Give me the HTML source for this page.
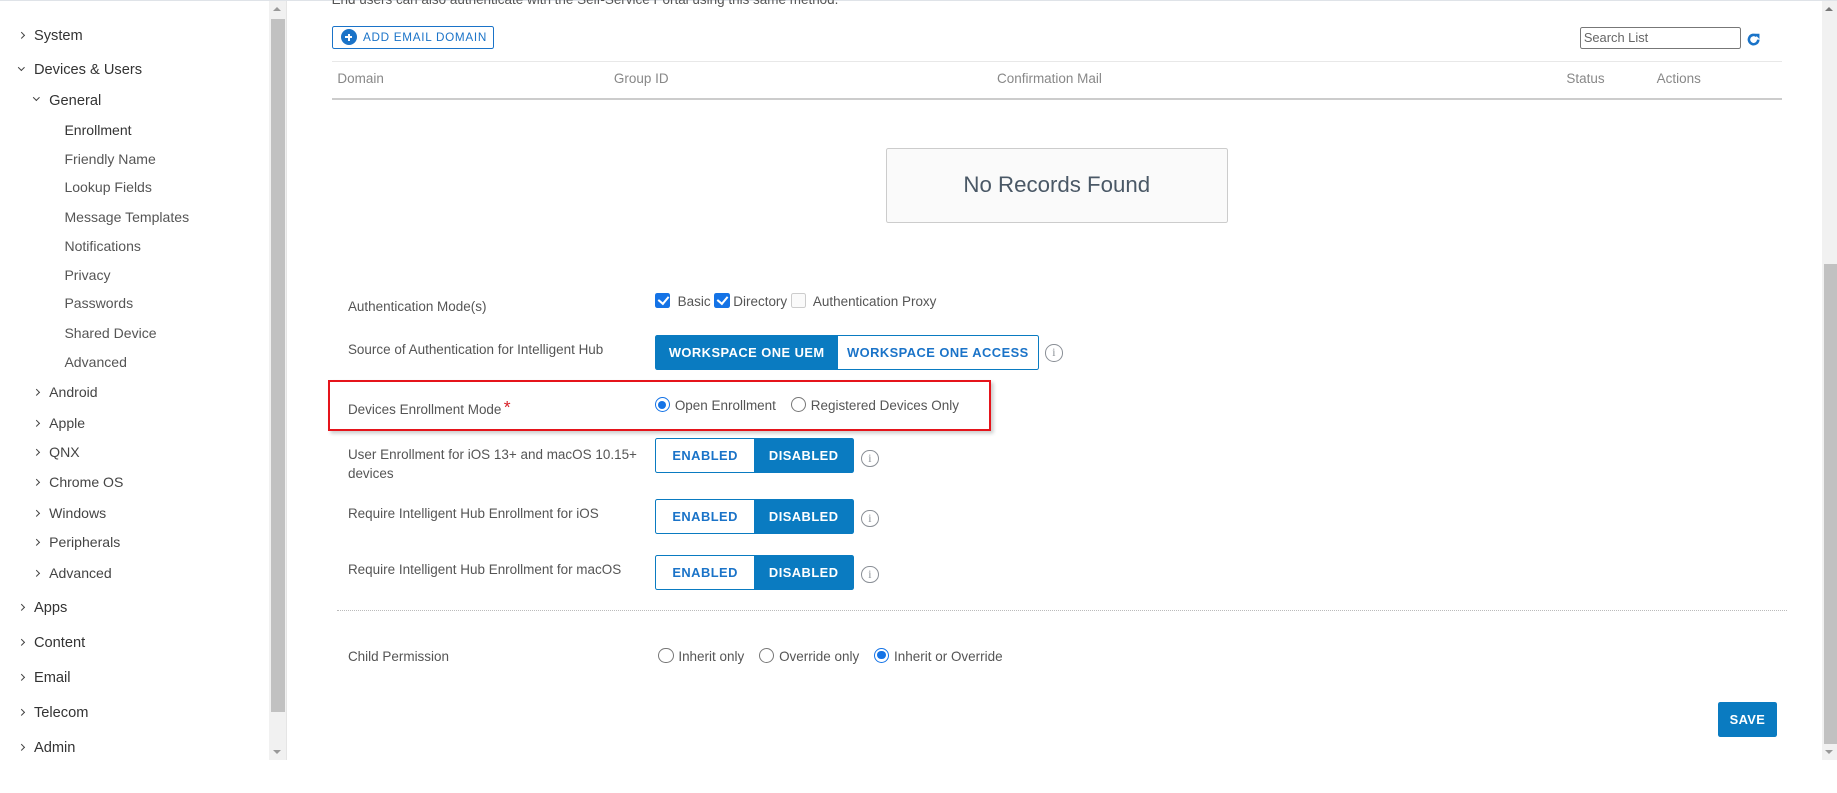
<!DOCTYPE html>
<html><head><meta charset="utf-8">
<style>
*{box-sizing:border-box;margin:0;padding:0}
html,body{width:1837px;height:793px;overflow:hidden;background:#fff}
#w{position:relative;width:1568px;height:677px;zoom:1.1716;font-family:"Liberation Sans",sans-serif;color:#565656;font-size:12px}
.a{position:absolute;white-space:nowrap}
.top{position:absolute;left:0;top:0;width:1568px;height:1px;background:#dfe3e8}
.nav1{font-size:12.5px;color:#333}
.nav2{font-size:12px;color:#444}
.nav3{font-size:12px;color:#555}
.chev{display:inline-block;width:4px;height:4px;border-right:1px solid #444;border-bottom:1px solid #444;transform:rotate(-45deg);margin-right:9px;vertical-align:2px}
.chevd{transform:rotate(45deg);vertical-align:4px}
.lbl{font-size:11.5px;color:#555}
.tg{position:absolute;display:flex;border:1px solid #0a7bc1;border-radius:2px;height:28px;font-size:11px;font-weight:bold;letter-spacing:.4px}
.tg span{display:flex;align-items:center;justify-content:center;color:#1a73c8}
.tg .on{background:#0a7bc1;color:#fff}
.info{position:absolute;width:15px;height:15px;border:1px solid #8a8f96;border-radius:50%;font-size:10px;color:#8a8f96;text-align:center;line-height:13px;font-family:"Liberation Serif",serif}
.cb{display:inline-block;width:13px;height:13px;border-radius:2px;background:#1473e6;vertical-align:-2px;position:relative}
.cb:after{content:"";position:absolute;left:4px;top:1px;width:4px;height:7px;border:solid #fff;border-width:0 2px 2px 0;transform:rotate(40deg)}
.cbo{display:inline-block;width:13px;height:13px;border-radius:2px;border:1px solid #ccc;background:#fafafa;vertical-align:-2px}
.rd{display:inline-block;width:13px;height:13px;border-radius:50%;border:1px solid #777;vertical-align:-2px;margin-right:4px}
.rd.on{border-color:#1473e6;position:relative}
.rd.on:after{content:"";position:absolute;left:2px;top:2px;width:7px;height:7px;border-radius:50%;background:#1473e6}
.opt{font-size:11.5px;color:#555}
</style></head><body><div id="w">
<div class="top"></div>
<div class="a nav1" style="left:16px;top:24px"><span class="chev"></span>System</div>
<div class="a nav1" style="left:16px;top:53px"><span class="chev chevd"></span>Devices &amp; Users</div>
<div class="a nav1" style="left:29px;top:79px"><span class="chev chevd"></span>General</div>
<div class="a nav3" style="left:55px;top:104px;color:#333">Enrollment</div>
<div class="a nav3" style="left:55px;top:129px">Friendly Name</div>
<div class="a nav3" style="left:55px;top:153px">Lookup Fields</div>
<div class="a nav3" style="left:55px;top:178px">Message Templates</div>
<div class="a nav3" style="left:55px;top:203px">Notifications</div>
<div class="a nav3" style="left:55px;top:228px">Privacy</div>
<div class="a nav3" style="left:55px;top:252px">Passwords</div>
<div class="a nav3" style="left:55px;top:277px">Shared Device</div>
<div class="a nav3" style="left:55px;top:302px">Advanced</div>
<div class="a nav2" style="left:29px;top:328px"><span class="chev"></span>Android</div>
<div class="a nav2" style="left:29px;top:354px"><span class="chev"></span>Apple</div>
<div class="a nav2" style="left:29px;top:379px"><span class="chev"></span>QNX</div>
<div class="a nav2" style="left:29px;top:405px"><span class="chev"></span>Chrome OS</div>
<div class="a nav2" style="left:29px;top:431px"><span class="chev"></span>Windows</div>
<div class="a nav2" style="left:29px;top:456px"><span class="chev"></span>Peripherals</div>
<div class="a nav2" style="left:29px;top:482px"><span class="chev"></span>Advanced</div>
<div class="a nav1" style="left:16px;top:512px"><span class="chev"></span>Apps</div>
<div class="a nav1" style="left:16px;top:542px"><span class="chev"></span>Content</div>
<div class="a nav1" style="left:16px;top:572px"><span class="chev"></span>Email</div>
<div class="a nav1" style="left:16px;top:602px"><span class="chev"></span>Telecom</div>
<div class="a nav1" style="left:16px;top:632px"><span class="chev"></span>Admin</div>
<div class="a" style="left:230px;top:1px;width:14px;height:648px;background:#f1f1f1"></div>
<div class="a" style="left:231px;top:16px;width:12px;height:592px;background:#c1c1c1"></div>
<div class="a" style="left:233px;top:6px;width:0;height:0;border-left:4px solid transparent;border-right:4px solid transparent;border-bottom:4px solid #999"></div>
<div class="a" style="left:233px;top:640px;width:0;height:0;border-left:4px solid transparent;border-right:4px solid transparent;border-top:4px solid #999"></div>
<div class="a" style="left:244px;top:1px;width:1px;height:648px;background:#e5e5e5"></div>
<div class="a" style="left:283px;top:-7px;font-size:11.5px;color:#555">End users can also authenticate with the Self-Service Portal using this same method.</div>
<div class="a" style="left:283px;top:22px;width:139px;height:20px;border:1px solid #1a73c8;border-radius:2px;font-size:10px;color:#1a73c8;letter-spacing:.6px;line-height:18px;padding-left:26px">ADD EMAIL DOMAIN
<span style="position:absolute;left:7px;top:2px;width:14px;height:14px;border-radius:50%;background:#1a73c8"></span>
<span style="position:absolute;left:11px;top:8px;width:6px;height:2px;background:#fff"></span>
<span style="position:absolute;left:13px;top:6px;width:2px;height:6px;background:#fff"></span></div>
<div class="a" style="left:1349px;top:23px;width:137px;height:19px;border:1px solid #777;border-radius:2px;font-size:11px;color:#666;line-height:17px;padding-left:2px">Search List</div>
<svg class="a" style="left:1490px;top:27px" width="13" height="13" viewBox="0 0 13 13"><path d="M10.5 6.5a4 4 0 1 1-1.3-3" fill="none" stroke="#1a73c8" stroke-width="2.2"/><path d="M7 1.5h4.5v4.5z" fill="#1a73c8"/></svg>
<div class="a" style="left:283px;top:52px;width:1238px;height:1px;background:#e8e8e8"></div>
<div class="a" style="left:288px;top:61px;font-size:11.5px;color:#888">Domain</div>
<div class="a" style="left:524px;top:61px;font-size:11.5px;color:#888">Group ID</div>
<div class="a" style="left:851px;top:61px;font-size:11.5px;color:#888">Confirmation Mail</div>
<div class="a" style="left:1337px;top:61px;font-size:11.5px;color:#888">Status</div>
<div class="a" style="left:1414px;top:61px;font-size:11.5px;color:#888">Actions</div>
<div class="a" style="left:283px;top:84px;width:1238px;height:1px;background:#ccc"></div>
<div class="a" style="left:756px;top:126px;width:292px;height:64px;border:1px solid #ccc;border-radius:2px;background:#fafafa;font-size:19px;color:#4a5866;text-align:center;line-height:62px">No Records Found</div>

<div class="a lbl" style="left:297px;top:255px">Authentication Mode(s)</div>
<div class="a opt" style="left:559px;top:250px"><span class="cb"></span>&nbsp; Basic <span class="cb"></span>&nbsp;Directory <span class="cbo"></span>&nbsp; Authentication Proxy</div>

<div class="a lbl" style="left:297px;top:292px">Source of Authentication for Intelligent Hub</div>
<div class="tg" style="left:559px;top:286px;width:328px;height:30px"><span class="on" style="width:155px">WORKSPACE ONE UEM</span><span style="flex:1">WORKSPACE ONE ACCESS</span></div>
<div class="info" style="left:892px;top:294px">i</div>

<div class="a" style="left:280px;top:324px;width:566px;height:44px;border:2px solid #e5141b;box-shadow:2px 2px 3px rgba(0,0,0,.2)"></div>
<div class="a lbl" style="left:297px;top:339px">Devices Enrollment Mode<span style="color:#d8232a;font-size:15px;vertical-align:1px;margin-left:2px">*</span></div>
<div class="a opt" style="left:559px;top:339px"><span class="rd on"></span>Open Enrollment &nbsp;&nbsp;&nbsp;<span class="rd"></span>Registered Devices Only</div>

<div class="a lbl" style="left:297px;top:381px;line-height:16px">User Enrollment for iOS 13+ and macOS 10.15+<br>devices</div>
<div class="tg" style="left:559px;top:374px;width:170px;height:30px"><span style="width:84px">ENABLED</span><span class="on" style="flex:1">DISABLED</span></div>
<div class="info" style="left:735px;top:384px">i</div>

<div class="a lbl" style="left:297px;top:432px">Require Intelligent Hub Enrollment for iOS</div>
<div class="tg" style="left:559px;top:426px;width:170px;height:30px"><span style="width:84px">ENABLED</span><span class="on" style="flex:1">DISABLED</span></div>
<div class="info" style="left:735px;top:435px">i</div>

<div class="a lbl" style="left:297px;top:480px">Require Intelligent Hub Enrollment for macOS</div>
<div class="tg" style="left:559px;top:474px;width:170px;height:30px"><span style="width:84px">ENABLED</span><span class="on" style="flex:1">DISABLED</span></div>
<div class="info" style="left:735px;top:483px">i</div>

<div class="a" style="left:288px;top:521px;width:1237px;height:0;border-top:1px dotted #bbb"></div>

<div class="a lbl" style="left:297px;top:554px">Child Permission</div>
<div class="a opt" style="left:562px;top:553px"><span class="rd"></span>Inherit only &nbsp;&nbsp;&nbsp;<span class="rd"></span>Override only &nbsp;&nbsp;&nbsp;<span class="rd on"></span>Inherit or Override</div>

<div class="a" style="left:1466px;top:599px;width:51px;height:30px;background:#0a7bc1;border-radius:2px;color:#fff;font-size:11px;font-weight:bold;letter-spacing:.3px;text-align:center;line-height:30px">SAVE</div>

<div class="a" style="left:1555px;top:1px;width:13px;height:648px;background:#f1f1f1"></div>
<div class="a" style="left:1557px;top:225px;width:11px;height:410px;background:#c1c1c1"></div>
<div class="a" style="left:1558px;top:6px;width:0;height:0;border-left:4px solid transparent;border-right:4px solid transparent;border-bottom:4px solid #777"></div>
<div class="a" style="left:1558px;top:640px;width:0;height:0;border-left:4px solid transparent;border-right:4px solid transparent;border-top:4px solid #999"></div>
</div></body></html>
